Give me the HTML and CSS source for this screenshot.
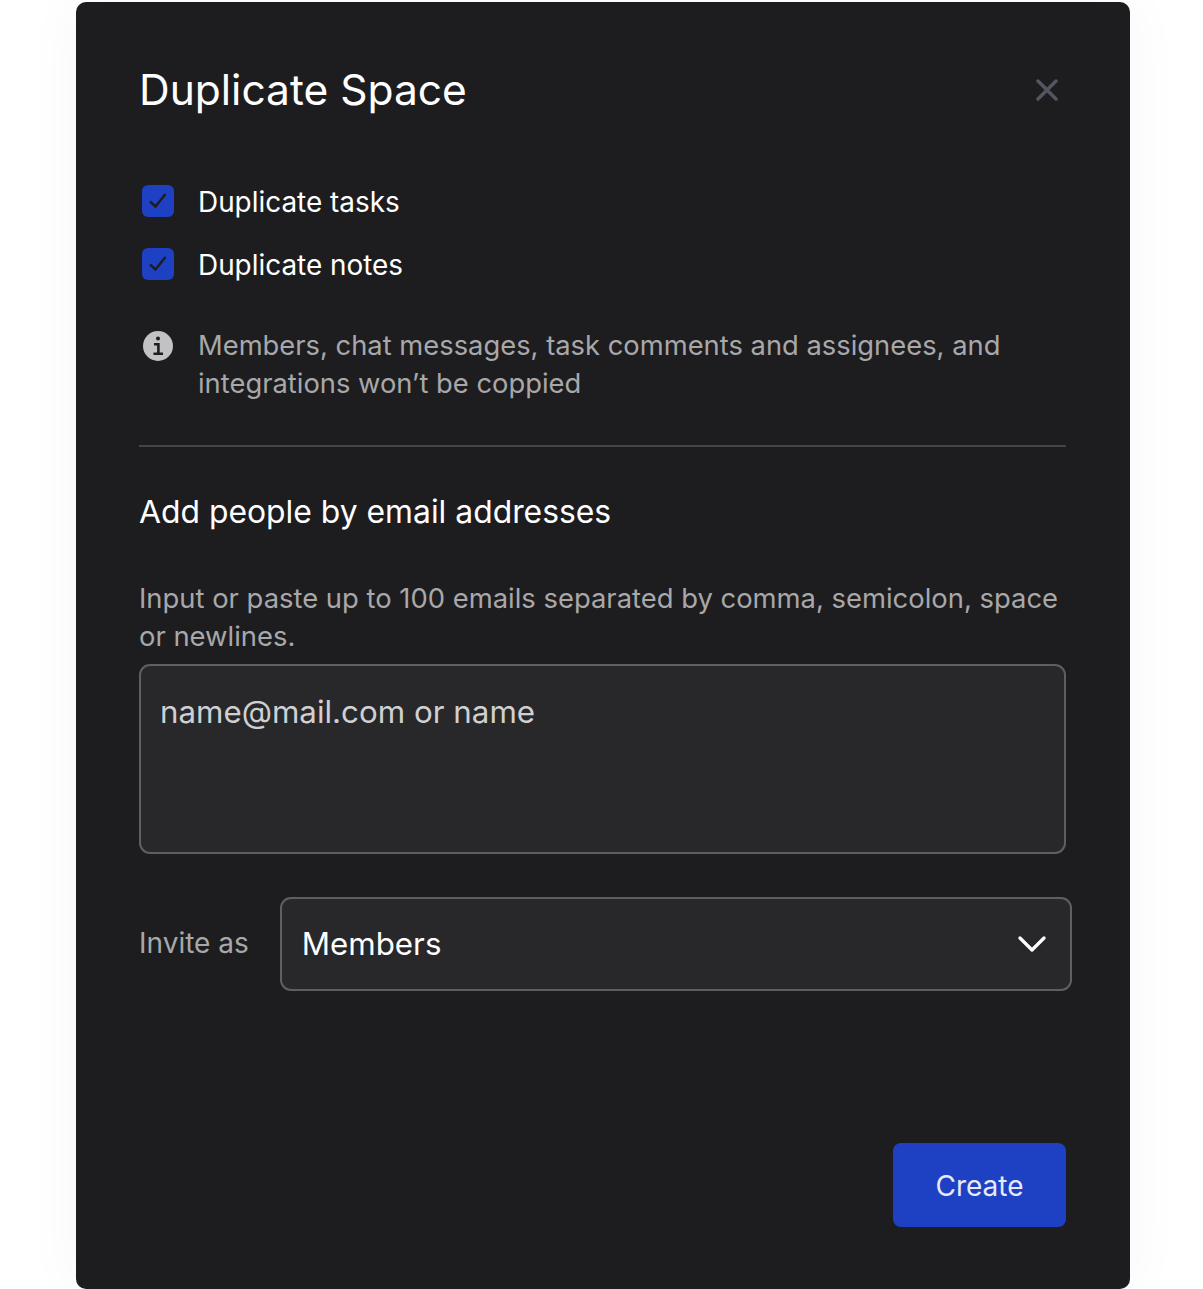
FILE: index.html
```html
<!DOCTYPE html>
<html>
<head>
    <title>Duplicate Space</title>
    <link rel="stylesheet" href="styles.css">
</head>
<body>
    <div class="modal">
        <div class="modal-header">
            <h1>Duplicate Space</h1>
            <button class="close-button" aria-label="Close">
                <svg width="22" height="22" viewBox="0 0 22 22"><path d="M2 2 L20 20 M20 2 L2 20" /></svg>
            </button>
        </div>

        <div class="check-row">
            <span class="checkbox">
                <svg width="32" height="32" viewBox="0 0 32 32"><path d="M8 16.5 L13.5 21.5 L23.5 9" /></svg>
            </span>
            <span class="check-label">Duplicate tasks</span>
        </div>
        <div class="check-row">
            <span class="checkbox">
                <svg width="32" height="32" viewBox="0 0 32 32"><path d="M8 16.5 L13.5 21.5 L23.5 9" /></svg>
            </span>
            <span class="check-label">Duplicate notes</span>
        </div>

        <div class="notice">
            <svg class="info-icon" width="30" height="30" viewBox="0 0 30 30">
                <circle cx="15" cy="15" r="15" />
                <circle class="info-mark" cx="15" cy="7.6" r="2" />
                <path class="info-stem" d="M11 13.2 H15.4 V22.5 M10.5 22.7 H20" />
            </svg>
            <p>Members, chat messages, task comments and assignees, and integrations won’t be coppied</p>
        </div>

        <hr class="divider">

        <h2>Add people by email addresses</h2>
        <p class="hint">Input or paste up to 100 emails separated by comma, semicolon, space or newlines.</p>
        <div class="email-box">name@mail.com or name</div>

        <div class="invite-row">
            <label>Invite as</label>
            <div class="select-box">
                <span>Members</span>
                <svg width="28" height="18" viewBox="0 0 28 18"><path d="M2 3 L14 15 L26 3" /></svg>
            </div>
        </div>

        <div class="modal-footer">
            <button class="button-primary">Create</button>
        </div>
    </div>
</body>
</html>
```

FILE: styles.css
```css
html, body {
    height: 100%;
}
body {
    font-family: 'Inter', sans-serif;
    margin: 0;
    padding: 2px 0 0 76px;
    box-sizing: border-box;
    background-color: white;
    overflow: hidden;
}
.modal {
    width: 1054px;
    height: 1287px;
    box-sizing: border-box;
    padding: 0 64px 0 63px;
    background-color: #1d1d1f;
    border-radius: 10px;
    box-shadow: 0 0 60px rgba(0, 0, 0, 0.04);
    color: white;
}
.modal-header {
    display: flex;
    justify-content: space-between;
    align-items: center;
    height: 176px;
    margin-bottom: 7px;
}
.modal-header h1 {
    margin: -2px 0 0;
    font-size: 42.5px;
    font-weight: 400;
}
.close-button {
    background: none;
    border: none;
    padding: 0;
    margin-right: 8px;
    display: flex;
}
.close-button path {
    stroke: #535661;
    stroke-width: 3.5;
    stroke-linecap: round;
    fill: none;
}
.check-row {
    display: flex;
    align-items: center;
    gap: 24px;
    height: 32px;
    margin: 0 0 31px 3px;
    font-size: 27.9px;
}
.check-label {
    padding-top: 1px;
}
.checkbox {
    width: 32px;
    height: 32px;
    background-color: #1e40c3;
    border-radius: 6px;
    display: flex;
}
.checkbox path {
    stroke: #1d1d1f;
    stroke-width: 2.4;
    fill: none;
}
.notice {
    display: flex;
    gap: 25px;
    margin: 0 0 0 4px;
    padding-top: 16px;
    color: #a8a8aa;
}
.info-icon {
    margin-top: 4px;
    flex-shrink: 0;
}
.info-icon circle {
    fill: #c2c2c4;
}
.info-icon .info-mark {
    fill: #1d1d1f;
}
.info-stem {
    stroke: #1d1d1f;
    stroke-width: 2.6;
    fill: none;
}
.notice p {
    margin: 0;
    font-size: 27.35px;
    line-height: 38px;
}
.divider {
    border: none;
    height: 2px;
    background-color: #454547;
    margin: 42px 0 0;
}
h2 {
    font-size: 31.85px;
    font-weight: 400;
    margin: 46px 0 0;
    line-height: 38px;
}
.hint {
    margin: 48px 0 0;
    font-size: 27.4px;
    line-height: 38px;
    color: #a8a8aa;
}
.email-box {
    margin-top: 9px;
    height: 190px;
    box-sizing: border-box;
    padding: 26px 19px;
    background-color: #28282a;
    border: 2px solid #5f5f61;
    border-radius: 11px;
    font-size: 31.3px;
    line-height: 40px;
    color: #d0d0d2;
}
.invite-row {
    display: flex;
    align-items: center;
    gap: 31px;
    margin-top: 43px;
    margin-right: -6px;
}
.invite-row label {
    margin-top: -2px;
    font-size: 28px;
    color: #a8a8aa;
}
.select-box {
    flex: 1;
    height: 94px;
    box-sizing: border-box;
    padding: 0 24px 0 20px;
    background-color: #28282a;
    border: 2px solid #5f5f61;
    border-radius: 11px;
    display: flex;
    align-items: center;
    justify-content: space-between;
    font-size: 31.3px;
}
.select-box path {
    stroke: white;
    stroke-width: 3.2;
    stroke-linecap: round;
    stroke-linejoin: round;
    fill: none;
}
.modal-footer {
    display: flex;
    justify-content: flex-end;
    margin-top: 152px;
}
.button-primary {
    width: 173px;
    height: 84px;
    padding-top: 2px;
    border: none;
    border-radius: 8px;
    background-color: #1e40c3;
    color: #e6eafa;
    font-family: inherit;
    font-size: 28px;
}
```
